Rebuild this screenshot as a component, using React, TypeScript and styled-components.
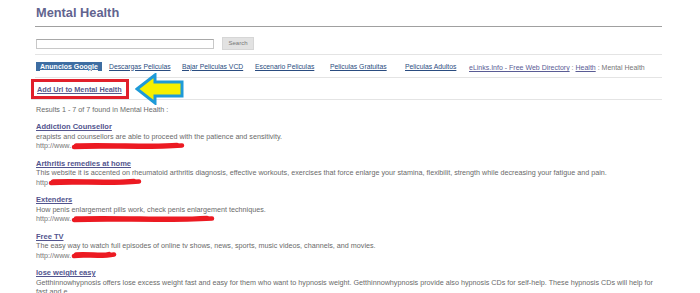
import styled, { createGlobalStyle } from 'styled-components'

const Global = createGlobalStyle`
  body {
    margin: 0;
    background: #fff;
    font-family: Arial, "Liberation Sans", sans-serif;
  }
`

const Page = styled.div`
  width: 700px;
  height: 293px;
  overflow: hidden;
  padding: 4px 38px 0 35px;
  box-sizing: border-box;
`

const Title = styled.h1`
  margin: 0;
  padding: 1px 0 6px 1px;
  font-size: 12.8px;
  line-height: 15px;
  font-weight: bold;
  color: #62648f;
  border-bottom: 1px solid #a0a0a0;
`

const SearchRow = styled.form`
  display: flex;
  align-items: center;
  gap: 8px;
  margin: 0;
  padding: 10px 0 4px 1px;
  border-bottom: 1px solid #e4e4e4;
`

const SearchInput = styled.div`
  width: 176px;
  height: 8px;
  border: 1px solid #c8c8c8;
  border-top-color: #a8a8a8;
  background: #fff;
`

const SearchButton = styled.div`
  width: 30px;
  height: 11px;
  background: #e2e2e2;
  border: 1px solid #d6d6d6;
  color: #777;
  font-size: 6px;
  line-height: 11px;
  text-align: center;
`

const AdRow = styled.div`
  display: flex;
  align-items: center;
  height: 22px;
  padding-left: 1px;
  border-bottom: 1px solid #e4e4e4;
  font-size: 6.8px;
`

const AdLabel = styled.span`
  width: 66px;
  box-sizing: border-box;
  background: #3d6da2;
  color: #fff;
  font-weight: bold;
  text-decoration: underline;
  text-align: center;
  padding: 1px 0;
  margin-right: 7px;
  font-size: 7px;
  white-space: nowrap;
`

const AdLink = styled.a<{ $w: number }>`
  width: ${(p) => p.$w}px;
  color: #2a4c80;
  text-decoration: underline;
  white-space: nowrap;
`

const Crumbs = styled.span`
  margin-top: 3px;
  font-size: 7px;
  color: #777;
  white-space: nowrap;
  a {
    color: #5a5c95;
    text-decoration: underline;
  }
`

const AddRow = styled.div`
  display: flex;
  align-items: center;
  gap: 6px;
  height: 21px;
  border-bottom: 1px solid #e4e4e4;
  margin-left: -4px;
`

const AddBox = styled.div`
  border: 3px solid #e11f2b;
  padding: 3px 4px 2px 3px;
  font-size: 7.3px;
  font-weight: bold;
  a {
    color: #55578d;
    text-decoration: underline;
  }
`

const Results = styled.div`
  padding: 5px 0 0 1px;
  font-size: 7.2px;
  color: #6a6a6a;
`

const Summary = styled.div`
  margin-bottom: 8px;
`

const Item = styled.div`
  margin-bottom: 8px;
  line-height: 9.5px;
`

const ItemTitle = styled.a`
  display: block;
  color: #52548e;
  font-weight: bold;
  font-size: 7.5px;
  text-decoration: underline;
`

const Desc = styled.div`
  color: #6a6a6a;
`

const Url = styled.div`
  display: flex;
  align-items: center;
  color: #777;
`

const Arrow = () => (
  <svg width="50" height="32" viewBox="0 0 50 32">
    <path
      d="M2 16 L20 2 L20 9 L47 9 L47 23 L20 23 L20 30 Z"
      fill="#f6f000"
      stroke="#1e9ad8"
      strokeWidth="3"
      strokeLinejoin="miter"
    />
  </svg>
)

const Scribble = ({ w }: { w: number }) => (
  <svg width={w} height="8" viewBox={`0 0 ${w} 8`}>
    <path
      d={`M3 5 C ${w * 0.3} 3, ${w * 0.6} 6.5, ${w - 3} 3.5 M5 3.5 C ${w * 0.35} 2, ${w * 0.7} 5.5, ${w - 8} 3`}
      stroke="#ec1a22"
      strokeWidth="4.5"
      strokeLinecap="round"
      fill="none"
    />
  </svg>
)

const items = [
  {
    title: 'Addiction Counsellor',
    desc: 'erapists and counsellors are able to proceed with the patience and sensitivity.',
    url: 'http://www.',
    w: 114,
  },
  {
    title: 'Arthritis remedies at home',
    desc: 'This website it is accented on rheumatoid arthritis diagnosis, effective workouts, exercises that force enlarge your stamina, flexibilit, strength while decreasing your fatigue and pain.',
    url: 'http',
    w: 94,
  },
  {
    title: 'Extenders',
    desc: 'How penis enlargement pills work, check penis enlargement techniques.',
    url: 'http://www.',
    w: 144,
  },
  {
    title: 'Free TV',
    desc: 'The easy way to watch full episodes of online tv shows, news, sports, music videos, channels, and movies.',
    url: 'http://www.',
    w: 46,
  },
  {
    title: 'lose weight easy',
    desc: 'Getthinnowhypnosis offers lose excess weight fast and easy for them who want to hypnosis weight. Getthinnowhypnosis provide also hypnosis CDs for self-help. These hypnosis CDs will help for fast and e...',
    url: '',
    w: 0,
  },
]

const ads = [
  ['Descargas Peliculas', 73],
  ['Bajar Peliculas VCD', 73],
  ['Escenario Peliculas', 75],
  ['Peliculas Gratuitas', 75],
  ['Peliculas Adultos', 64],
] as const

export default function App() {
  return (
    <Page>
      <Global />
      <Title>Mental Health</Title>
      <SearchRow>
        <SearchInput />
        <SearchButton>Search</SearchButton>
      </SearchRow>
      <AdRow>
        <AdLabel>Anuncios Google</AdLabel>
        {ads.map(([t, w]) => (
          <AdLink key={t} $w={w}>
            {t}
          </AdLink>
        ))}
        <Crumbs>
          <a>eLinks.Info - Free Web Directory</a> : <a>Health</a> : Mental Health
        </Crumbs>
      </AdRow>
      <AddRow>
        <AddBox>
          <a>Add Url to Mental Health</a>
        </AddBox>
        <Arrow />
      </AddRow>
      <Results>
        <Summary>Results 1 - 7 of 7 found in Mental Health :</Summary>
        {items.map((it) => (
          <Item key={it.title}>
            <ItemTitle>{it.title}</ItemTitle>
            <Desc>{it.desc}</Desc>
            {it.url && (
              <Url>
                {it.url}
                <Scribble w={it.w} />
              </Url>
            )}
          </Item>
        ))}
      </Results>
    </Page>
  )
}
